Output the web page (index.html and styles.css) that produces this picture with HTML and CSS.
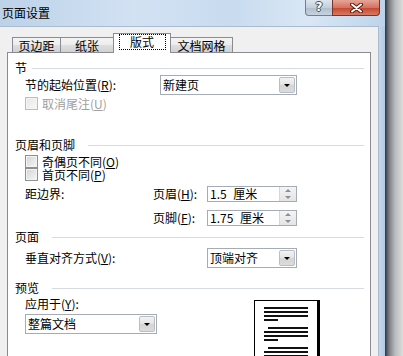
FILE: index.html
```html
<!DOCTYPE html>
<html lang="zh-CN">
<head>
    <meta charset="UTF-8">
    <title>页面设置</title>
    <link rel="stylesheet" href="styles.css">
</head>
<body>
    <div class="window">
        <div class="titlebar">
            <span class="title">页面设置</span>
            <div class="caption-buttons">
                <div class="btn-help">?</div>
                <div class="btn-close">
                    <svg width="13" height="10" viewBox="0 0 13 10">
                        <path d="M2 1.5 L11 8.5 M11 1.5 L2 8.5" stroke="#5b1d12" stroke-width="4" stroke-linecap="round"/>
                        <path d="M2 1.5 L11 8.5 M11 1.5 L2 8.5" stroke="#fff" stroke-width="2" stroke-linecap="round"/>
                    </svg>
                </div>
            </div>
        </div>

        <div class="frame">
            <div class="client">
                <div class="tabs">
                    <div class="tab tab-margins">页边距</div>
                    <div class="tab tab-paper">纸张</div>
                    <div class="tab tab-layout active"><span class="focus">版式</span></div>
                    <div class="tab tab-grid">文档网格</div>
                </div>

                <div class="panel">
                    <div class="group-head head-section"><span>节</span><i class="rule"></i></div>
                    <div class="row row-select">
                        <span class="label w-start">节的起始位置(<u>R</u>):</span>
                        <div class="select sel-start"><span class="value">新建页</span><b class="drop"></b></div>
                    </div>
                    <div class="row row-check row-disabled">
                        <i class="checkbox disabled"></i>
                        <span>取消尾注(<u>U</u>)</span>
                    </div>

                    <div class="group-head head-hf"><span>页眉和页脚</span><i class="rule"></i></div>
                    <div class="row row-check check-first">
                        <i class="checkbox"></i>
                        <span>奇偶页不同(<u>O</u>)</span>
                    </div>
                    <div class="row row-check">
                        <i class="checkbox"></i>
                        <span>首页不同(<u>P</u>)</span>
                    </div>
                    <div class="row row-spin spin-first">
                        <span class="label w-edge">距边界:</span>
                        <span class="label w-hf">页眉(<u>H</u>):</span>
                        <div class="spin"><span class="value">1.5 厘米</span><b class="spinner"><i class="up"></i><i class="down"></i></b></div>
                    </div>
                    <div class="row row-spin spin-second">
                        <span class="label w-edge"></span>
                        <span class="label w-hf">页脚(<u>F</u>):</span>
                        <div class="spin"><span class="value">1.75 厘米</span><b class="spinner"><i class="up"></i><i class="down"></i></b></div>
                    </div>

                    <div class="group-head head-page"><span>页面</span><i class="rule"></i></div>
                    <div class="row row-select row-valign">
                        <span class="label w-valign">垂直对齐方式(<u>V</u>):</span>
                        <div class="select sel-valign"><span class="value">顶端对齐</span><b class="drop"></b></div>
                    </div>

                    <div class="group-head head-preview"><span>预览</span><i class="rule"></i></div>
                    <div class="preview">
                        <div class="apply">
                            <span class="apply-label">应用于(<u>Y</u>):</span>
                            <div class="select sel-apply"><span class="value">整篇文档</span><b class="drop"></b></div>
                        </div>
                        <div class="page">
                            <svg width="62" height="56" viewBox="0 0 62 56">
                                <g fill="#111">
                                    <rect x="9" y="6" width="44" height="2"/>
                                    <rect x="9" y="10" width="44" height="2"/>
                                    <rect x="9" y="14" width="44" height="2"/>
                                    <rect x="9" y="18" width="14" height="2"/>
                                    <rect x="13" y="26" width="40" height="2"/>
                                    <rect x="9" y="30" width="44" height="2"/>
                                    <rect x="9" y="34" width="44" height="2"/>
                                    <rect x="9" y="38" width="14" height="2"/>
                                    <rect x="13" y="46" width="40" height="2"/>
                                    <rect x="9" y="50" width="44" height="2"/>
                                    <rect x="9" y="54" width="44" height="2"/>
                                </g>
                            </svg>
                        </div>
                    </div>
                </div>
            </div>
            <div class="frame-edge"></div>
        </div>
    </div>
    <div class="shadow"></div>
</body>
</html>
```

FILE: styles.css
```css
* {
    box-sizing: border-box;
}

body {
    margin: 0;
    width: 403px;
    height: 356px;
    overflow: hidden;
    display: flex;
    font-family: "Noto Sans CJK SC", sans-serif;
    font-size: 12px;
    color: #000;
    background: #ececec;
}

.window {
    width: 385px;
    height: 356px;
    display: flex;
    flex-direction: column;
}

.shadow {
    flex: 1;
    background: linear-gradient(to right, #36404a 0, #36404a 1px, #565d64 2px, #83888c 5px, #b9bbbd 10px, #dcdcdc 18px);
}

/* title bar */
.titlebar {
    flex: none;
    height: 26px;
    display: flex;
    justify-content: space-between;
    align-items: flex-start;
    background: linear-gradient(to right, #bcd2e9 0%, #d2e2f3 35%, #c8dbef 60%, #d9e7f5 80%, #bed3ea 100%);
}

.title {
    margin: 6px 0 0 2px;
    line-height: 14px;
}

.caption-buttons {
    display: flex;
    margin-right: 5px;
}

.btn-help {
    width: 27px;
    height: 16px;
    border: 1px solid #6e8094;
    border-top: none;
    border-right: none;
    border-radius: 0 0 0 4px;
    background: linear-gradient(#dde6ef, #c3cfdc 50%, #aebccc 51%, #c6d2df);
    color: #fff;
    font: bold 12px/15px "DejaVu Sans", sans-serif;
    text-align: center;
    text-shadow: 1px 0 0 #3d4d62, -1px 0 0 #3d4d62, 0 1px 0 #3d4d62, 0 -1px 0 #3d4d62;
}

.btn-close {
    width: 48px;
    height: 16px;
    border: 1px solid #7c3327;
    border-top: none;
    border-radius: 0 0 4px 0;
    background: linear-gradient(#e6a597, #d5735f 50%, #c6442e 51%, #d67a63);
    display: flex;
    align-items: center;
    justify-content: center;
}

/* client area */
.frame {
    flex: 1;
    min-height: 0;
    display: flex;
}

.client {
    width: 379px;
    background: #f0f0f0;
    border-top: 1px solid #a9bbcd;
    border-right: 1px solid #a9bbcd;
    padding: 6px 0 0 7px;
}

.frame-edge {
    flex: 1;
    background: linear-gradient(to right, #c4d8ec, #b3cae3);
}

/* tabs */
.tabs {
    display: flex;
    align-items: flex-end;
    height: 20px;
    margin-left: 5px;
    position: relative;
    z-index: 1;
}

.tab {
    height: 15px;
    margin-bottom: 1px;
    border: 1px solid #898c95;
    border-bottom: none;
    background: linear-gradient(#f4f4f4, #ececec 50%, #dedede 51%, #d2d2d2);
    text-align: center;
    line-height: 13px;
    padding-top: 1px;
}

.tab + .tab {
    margin-left: -1px;
}

.tab-margins { width: 49px; }
.tab-paper { width: 54px; }
.tab-layout { width: 58px; }
.tab-grid { width: 63px; }

.tab.active {
    height: 20px;
    margin-bottom: 0;
    padding-top: 0;
    background: #fff;
}

.focus {
    display: inline-block;
    width: 47px;
    height: 16px;
    border: 1px dotted #000;
    line-height: 14px;
}

/* panel */
.panel {
    width: 364px;
    height: 304px;
    margin-top: -1px;
    overflow: hidden;
    background: #fff;
    border: 1px solid #898c95;
    border-bottom: none;
    padding: 0 6px 0 7px;
}

.group-head {
    display: flex;
    align-items: center;
    gap: 13px;
    height: 14px;
    line-height: 14px;
}

.group-head .rule {
    flex: 1;
    height: 1px;
    background: #d5dbe1;
}

.head-section { margin-top: 8px; gap: 5px; }
.head-hf { margin-top: 28px; }
.head-page { margin-top: 4px; }
.head-preview { margin-top: 13px; }

.row {
    display: flex;
    align-items: center;
    margin-left: 10px;
    line-height: 14px;
}

.row-select { height: 20px; }
.row-valign { margin-top: 4px; }

.row-check {
    height: 13px;
    line-height: 13px;
    gap: 4px;
}

.row-disabled {
    margin-top: 1px;
    height: 14px;
    color: #a0a0a0;
}

.check-first { margin-top: 3px; }

.row-spin { height: 16px; }
.spin-first { margin-top: 5px; }
.spin-second { margin-top: 8px; }

.label { flex: none; }
.w-start { width: 135px; }
.w-edge { width: 128px; }
.w-hf { width: 54px; }
.w-valign { width: 182px; }

.checkbox {
    flex: none;
    width: 13px;
    height: 13px;
    border: 1px solid #8e8f8f;
    background: linear-gradient(135deg, #d2d4d6, #f6f6f6);
    box-shadow: inset 0 0 0 1px #f4f4f4;
}

.checkbox.disabled {
    border-color: #bcbdbe;
    background: linear-gradient(135deg, #e6e7e8, #f8f8f8);
}

/* combo boxes */
.select {
    display: flex;
    height: 20px;
    padding: 1px;
    border: 1px solid #a5acb5;
    background: #fff;
}

.select .value,
.spin .value {
    flex: 1;
    padding-left: 1px;
    line-height: 16px;
}

.drop {
    width: 16px;
    border: 1px solid #b8bec6;
    border-radius: 2px;
    background: linear-gradient(#f3f3f3, #e3e3e3 50%, #d4d4d4 51%, #dcdcdc);
    display: flex;
    align-items: center;
    justify-content: center;
}

.drop::after {
    content: "";
    border-left: 3px solid transparent;
    border-right: 3px solid transparent;
    border-top: 3px solid #000;
}

.sel-start { width: 137px; }
.sel-valign { width: 90px; }
.sel-apply { width: 132px; margin-top: 3px; }

.spin {
    display: flex;
    width: 90px;
    height: 16px;
    border: 1px solid #a5acb5;
    background: #fff;
}

.spin .value {
    padding-left: 2px;
    line-height: 14px;
    word-spacing: 4px;
}

.spinner {
    width: 17px;
    display: flex;
    flex-direction: column;
    border-left: 1px solid #d3d6da;
    background: linear-gradient(#f4f4f4, #e4e4e4);
}

.spinner i {
    flex: 1;
    display: flex;
    align-items: center;
    justify-content: center;
}

.spinner .up::after {
    content: "";
    border-left: 3px solid transparent;
    border-right: 3px solid transparent;
    border-bottom: 3px solid #8a8f95;
}

.spinner .down::after {
    content: "";
    border-left: 3px solid transparent;
    border-right: 3px solid transparent;
    border-top: 3px solid #8a8f95;
}

/* preview */
.preview {
    display: flex;
    align-items: flex-start;
    margin: 2px 0 0 10px;
}

.apply {
    width: 229px;
}

.apply-label {
    display: block;
    height: 14px;
    line-height: 14px;
}

.page {
    width: 64px;
    height: 56px;
    margin-top: 3px;
    border: 1px solid #000;
    border-bottom: none;
    box-shadow: 2px 0 0 #000;
    background: #fff;
}

.page svg {
    display: block;
}
```
